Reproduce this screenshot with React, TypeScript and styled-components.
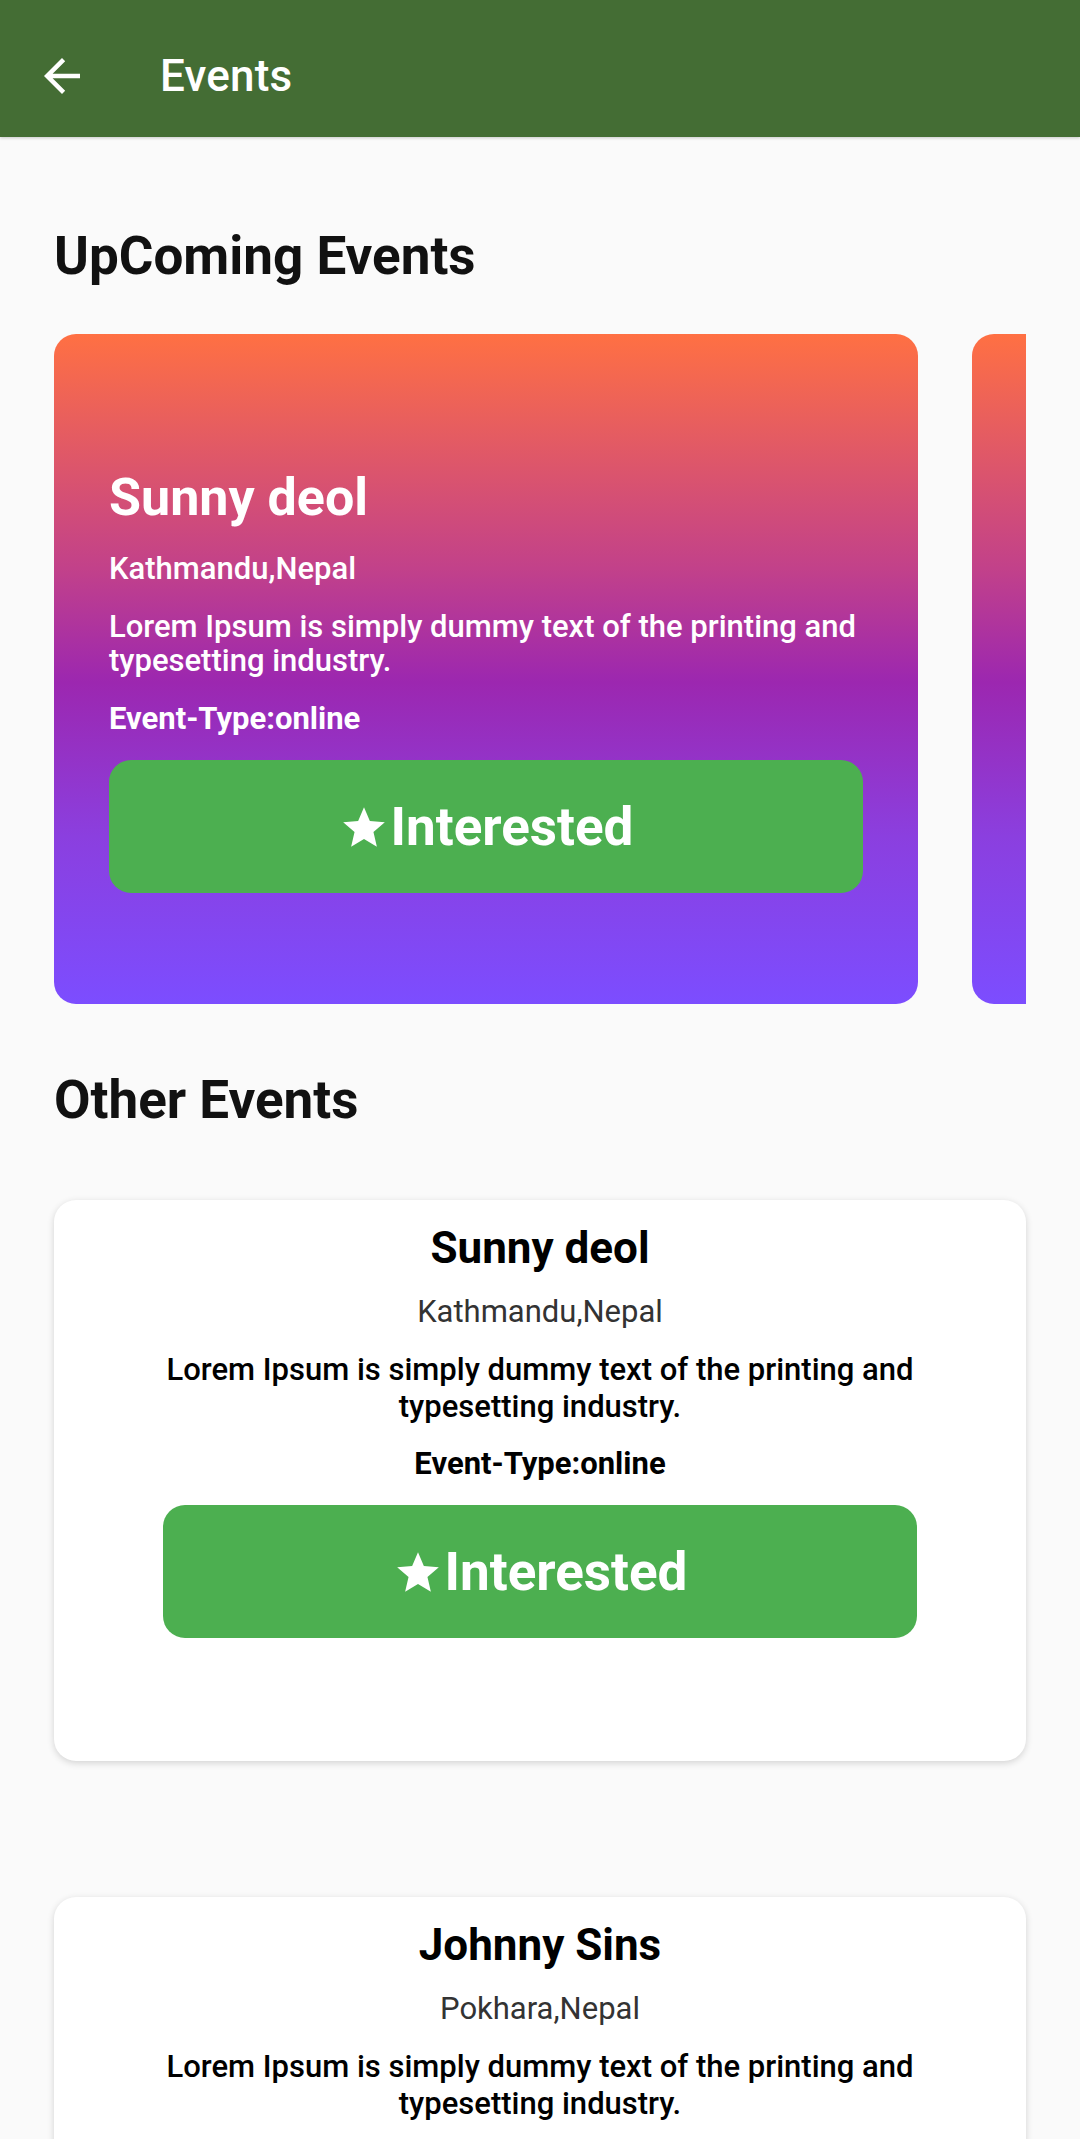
import React from "react";
import styled, { createGlobalStyle } from "styled-components";

const GlobalStyle = createGlobalStyle`
  html, body { margin: 0; padding: 0; background: #fafafa; }
  body { font-family: Roboto, "Noto Sans", "Liberation Sans", sans-serif; }
  * { box-sizing: border-box; }
`;

const Page = styled.div`
  width: 1080px;
  height: 2139px;
  background: #fafafa;
  overflow: hidden;
`;

const AppBar = styled.header`
  height: 137px;
  background: #446d34;
  display: flex;
  align-items: center;
  padding: 15px 0 0 35px;
  gap: 71px;
  box-shadow: 0 1px 3px rgba(0, 0, 0, 0.2);
`;

const BackButton = styled.button`
  border: none;
  background: transparent;
  padding: 0;
  width: 54px;
  height: 54px;
  display: flex;
  align-items: center;
  justify-content: center;
  color: #fff;
`;

const AppTitle = styled.h1`
  margin: 0;
  color: #fff;
  font-size: 44px;
  font-weight: 500;
  letter-spacing: 0.2px;
`;

const Content = styled.main`
  padding: 0 54px;
`;

const SectionTitle = styled.h2<{ $top: number; $bottom: number }>`
  margin: ${(p) => p.$top}px 0 ${(p) => p.$bottom}px;
  font-size: 53px;
  line-height: 60px;
  font-weight: 700;
  color: #111;
`;

const Carousel = styled.div`
  display: flex;
  gap: 54px;
  overflow: hidden;
`;

const GradientCard = styled.article`
  flex: 0 0 864px;
  height: 670px;
  border-radius: 22px;
  background: linear-gradient(
    180deg,
    #ff7043 0%,
    #c2418a 35%,
    #9c27b0 52%,
    #8b3fdf 75%,
    #7c4dff 100%
  );
  padding: 132px 55px 0;
  display: flex;
  flex-direction: column;
  color: #fff;
`;

const PeekCard = styled(GradientCard)`
  padding: 0;
`;

const HeroName = styled.h3`
  margin: 0;
  font-size: 52px;
  line-height: 64px;
  font-weight: 700;
`;

const HeroLocation = styled.p`
  margin: 21px 0 0;
  font-size: 31px;
  line-height: 36px;
  font-weight: 500;
`;

const HeroDesc = styled.p`
  margin: 23px 0 0;
  font-size: 31px;
  line-height: 34px;
  font-weight: 500;
`;

const HeroType = styled.p`
  margin: 23px 0 0;
  font-size: 31px;
  line-height: 36px;
  font-weight: 700;
`;

const InterestButton = styled.button`
  margin-top: 23px;
  height: 133px;
  width: 754px;
  flex: 0 0 auto;
  align-self: center;
  border: none;
  border-radius: 22px;
  background: #4caf50;
  color: #fff;
  font-family: Roboto, sans-serif;
  font-size: 53px;
  font-weight: 700;
  display: flex;
  align-items: center;
  justify-content: center;
  gap: 2px;
`;

const StarIcon = styled.svg`
  width: 50px;
  height: 50px;
  flex: 0 0 auto;
  margin-top: 2px;
`;

const CardList = styled.div`
  display: flex;
  flex-direction: column;
  gap: 136px;
`;

const EventCard = styled.article`
  background: #fff;
  border-radius: 22px;
  box-shadow: 0 2px 7px rgba(0, 0, 0, 0.16);
  padding: 22px 100px 123px;
  display: flex;
  flex-direction: column;
  align-items: center;
  text-align: center;
  color: #000;
`;

const CardName = styled.h3`
  margin: 0;
  font-size: 44px;
  line-height: 52px;
  font-weight: 700;
`;

const CardLocation = styled.p`
  margin: 20px 0 0;
  font-size: 31px;
  line-height: 36px;
  font-weight: 400;
  color: #333;
`;

const CardDesc = styled.p`
  margin: 21px 0 0;
  font-size: 31px;
  line-height: 37px;
  font-weight: 500;
`;

const CardType = styled.p`
  margin: 21px 0 0;
  font-size: 31px;
  line-height: 36px;
  font-weight: 700;
`;

const events = [
  { name: "Sunny deol", location: "Kathmandu,Nepal" },
  { name: "Johnny Sins", location: "Pokhara,Nepal" },
];

const DESC =
  "Lorem Ipsum is simply dummy text of the printing and typesetting industry.";

function Interested() {
  return (
    <InterestButton>
      <StarIcon viewBox="0 0 24 24" fill="currentColor" aria-hidden="true">
        <path d="M12 17.27L18.18 21l-1.64-7.03L22 9.24l-7.19-.61L12 2 9.19 8.63 2 9.24l5.46 4.73L5.82 21z" />
      </StarIcon>
      Interested
    </InterestButton>
  );
}

export default function App() {
  return (
    <Page>
      <GlobalStyle />
      <AppBar>
        <BackButton aria-label="Back">
          <svg width="54" height="54" viewBox="0 0 24 24" fill="currentColor">
            <path d="M20 11H7.83l5.59-5.59L12 4l-8 8 8 8 1.41-1.41L7.83 13H20v-2z" />
          </svg>
        </BackButton>
        <AppTitle>Events</AppTitle>
      </AppBar>
      <Content>
        <SectionTitle $top={89} $bottom={48}>
          UpComing Events
        </SectionTitle>
        <Carousel>
          <GradientCard>
            <HeroName>Sunny deol</HeroName>
            <HeroLocation>Kathmandu,Nepal</HeroLocation>
            <HeroDesc>{DESC}</HeroDesc>
            <HeroType>Event-Type:online</HeroType>
            <Interested />
          </GradientCard>
          <PeekCard />
        </Carousel>
        <SectionTitle $top={66} $bottom={70}>
          Other Events
        </SectionTitle>
        <CardList>
          {events.map((e) => (
            <EventCard key={e.name}>
              <CardName>{e.name}</CardName>
              <CardLocation>{e.location}</CardLocation>
              <CardDesc>{DESC}</CardDesc>
              <CardType>Event-Type:online</CardType>
              <Interested />
            </EventCard>
          ))}
        </CardList>
      </Content>
    </Page>
  );
}
